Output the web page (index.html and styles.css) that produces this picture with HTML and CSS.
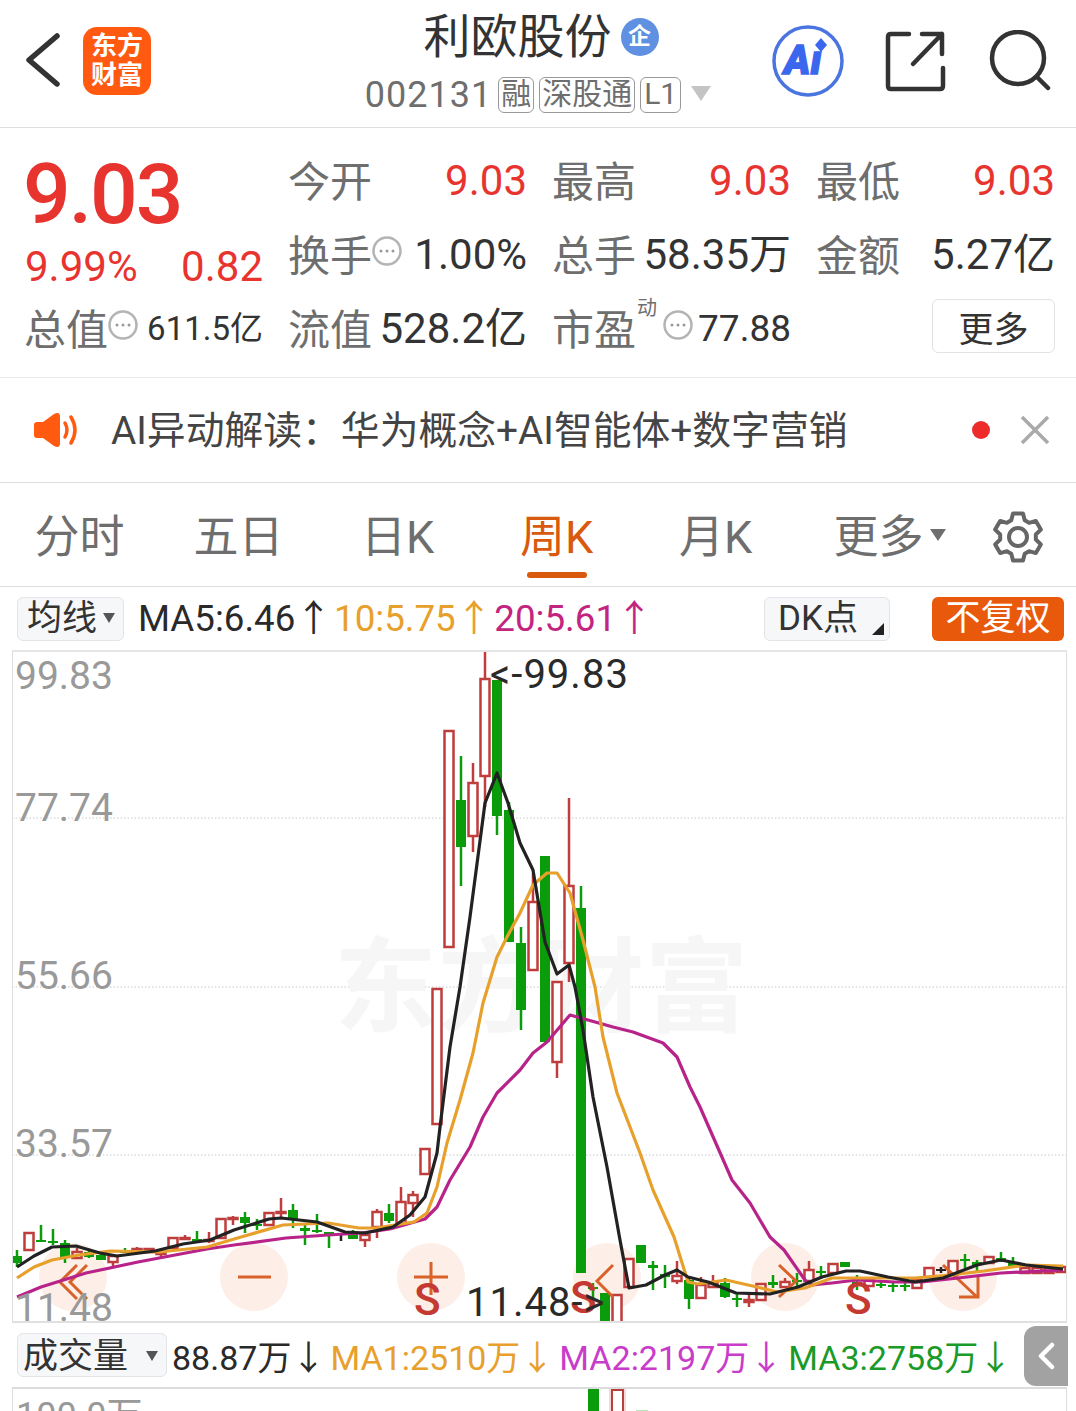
FILE: index.html
```html
<!DOCTYPE html>
<html lang="zh-CN">
<head>
    <meta charset="UTF-8">
    <title>利欧股份 002131</title>
    <link rel="stylesheet" href="styles.css">
</head>
<body>
    <svg class="sprite" xmlns="http://www.w3.org/2000/svg">
        <symbol id="more-dots" viewBox="0 0 30 30">
            <circle cx="15" cy="15" r="13.5" fill="none" stroke="#b4b4b4" stroke-width="2.5"></circle>
            <circle cx="9" cy="15" r="1.5" fill="#999"></circle>
            <circle cx="15" cy="15" r="1.5" fill="#999"></circle>
            <circle cx="21" cy="15" r="1.5" fill="#999"></circle>
        </symbol>
    </svg>

    <header class="top-bar">
        <div class="top-left">
            <svg class="back-icon" width="40" height="60" viewBox="0 0 40 60" fill="none" stroke="#333" stroke-width="5.5" stroke-linecap="round" stroke-linejoin="round">
                <polyline points="32,6 4,30 32,54"></polyline>
            </svg>
            <div class="app-logo"><span>东方</span><span>财富</span></div>
        </div>
        <div class="stock-title">
            <div class="stock-name">利欧股份<span class="corp-badge">企</span></div>
            <div class="stock-code">
                002131
                <span class="tag tag-first">融</span>
                <span class="tag">深股通</span>
                <span class="tag tag-l1">L1</span>
                <span class="code-arrow"></span>
            </div>
        </div>
        <div class="top-actions">
            <svg class="ai-icon" width="74" height="74" viewBox="0 0 74 74">
                <circle cx="37" cy="37" r="34" fill="none" stroke="#4a74e0" stroke-width="3.5"></circle>
                <text class="ai-text" x="13" y="50">Aı</text>
                <path d="M50 14 L56 21 L50 28 L44 21 Z" fill="#3a67ee"></path>
            </svg>
            <svg width="62" height="62" viewBox="0 0 62 62" fill="none" stroke="#333" stroke-width="4.5" stroke-linecap="round" stroke-linejoin="round">
                <path d="M24 4 H6 Q3 4 3 7 V56 Q3 59 6 59 H55 Q58 59 58 56 V38"></path>
                <path d="M28 34 L57 4 M37 4 H57 V24"></path>
            </svg>
            <svg width="62" height="62" viewBox="0 0 62 62" fill="none" stroke="#333" stroke-width="4.5" stroke-linecap="round">
                <circle cx="29" cy="28" r="26"></circle>
                <path d="M48 47 L59 58"></path>
            </svg>
        </div>
    </header>

    <section class="quote">
        <div class="price">9.03</div>
        <div class="cell"><span class="label">今开</span><span class="val up">9.03</span></div>
        <div class="cell"><span class="label">最高</span><span class="val up">9.03</span></div>
        <div class="cell"><span class="label">最低</span><span class="val up">9.03</span></div>

        <div class="cell change"><span class="val up">9.99%</span><span class="val up">0.82</span></div>
        <div class="cell"><span class="label">换手<svg class="dots"><use href="#more-dots"></use></svg></span><span class="val">1.00%</span></div>
        <div class="cell"><span class="label">总手</span><span class="val">58.35万</span></div>
        <div class="cell"><span class="label">金额</span><span class="val">5.27亿</span></div>

        <div class="cell"><span class="label">总值<svg class="dots"><use href="#more-dots"></use></svg></span><span class="val small">611.5亿</span></div>
        <div class="cell"><span class="label">流值</span><span class="val">528.2亿</span></div>
        <div class="cell"><span class="label">市盈<sup class="dyn">动</sup><svg class="dots"><use href="#more-dots"></use></svg></span><span class="val mid">77.88</span></div>
        <div class="cell"><span></span><button class="more-btn">更多</button></div>
    </section>

    <section class="notice">
        <svg class="speaker" width="44" height="36" viewBox="0 0 44 36">
            <path d="M3 10 H9 L20 2 Q26 -1 26 5 V31 Q26 37 20 34 L9 26 H3 Q0 26 0 23 V13 Q0 10 3 10 Z" fill="#ff5a10"></path>
            <path d="M31 11 Q35 18 31 25" fill="none" stroke="#ff5a10" stroke-width="3.5" stroke-linecap="round"></path>
            <path d="M37 5 Q45 18 37 31" fill="none" stroke="#ff5a10" stroke-width="3.5" stroke-linecap="round"></path>
        </svg>
        <div class="notice-text">AI异动解读：华为概念+AI智能体+数字营销</div>
        <span class="red-dot"></span>
        <svg class="close-icon" width="30" height="30" viewBox="0 0 30 30" stroke="#aaa" stroke-width="3.5">
            <path d="M2 2 L28 28 M28 2 L2 28"></path>
        </svg>
    </section>

    <nav class="tabs">
        <a class="tab">分时</a>
        <a class="tab">五日</a>
        <a class="tab">日K</a>
        <a class="tab active">周K</a>
        <a class="tab">月K</a>
        <a class="tab tab-more">更多<i class="tab-arrow"></i></a>
        <svg class="gear" width="52" height="52" viewBox="0 0 52 52" fill="none" stroke="#666" stroke-width="4" stroke-linejoin="round">
            <path d="M19.26 9.31 L21.01 2.52 H30.99 L32.74 9.31 L37.08 11.82 L43.84 9.94 L48.83 18.58 L43.82 23.49 V28.51 L48.83 33.42 L43.84 42.06 L37.08 40.18 L32.74 42.69 L30.99 49.48 H21.01 L19.26 42.69 L14.92 40.18 L8.16 42.06 L3.17 33.42 L8.18 28.51 V23.49 L3.17 18.58 L8.16 9.94 L14.92 11.82 Z"></path>
            <circle cx="26" cy="26" r="9"></circle>
        </svg>
    </nav>

    <div class="ma-bar">
        <div class="select">均线<i class="select-arrow"></i></div>
        <span class="ma black">MA5:6.46↑</span>
        <span class="ma orange">10:5.75↑</span>
        <span class="ma magenta">20:5.61↑</span>
        <div class="select dk">DK点<i class="corner"></i></div>
        <button class="adjust-btn">不复权</button>
    </div>

    <div class="chart-box">
        <svg id="kline" class="kline" viewBox="12 650 1055 673" xmlns="http://www.w3.org/2000/svg"></svg>
    </div>

    <div class="ma-bar vol-bar">
        <div class="select vol-select">成交量<i class="select-arrow"></i></div>
        <span class="ma black">88.87万↓</span>
        <span class="ma orange">MA1:2510万↓</span>
        <span class="ma violet">MA2:2197万↓</span>
        <span class="ma green">MA3:2758万↓</span>
        <div class="handle">
            <svg width="18" height="28" viewBox="0 0 18 28" fill="none" stroke="#fff" stroke-width="4.5" stroke-linecap="round" stroke-linejoin="round">
                <polyline points="15,3 4,14 15,25"></polyline>
            </svg>
        </div>
    </div>

    <div class="vol-chart">
        <span class="vol-label">100.0万</span>
        <span class="vol-bar-green"></span>
        <span class="vol-bar-red"></span>
        <span class="vol-bar-pale"></span>
    </div>

    <script src="chart.js"></script>
</body>
</html>
```

FILE: styles.css
```css
:root {
    --up: #e8342f;
    --line: #dedede;
    --text-gray: #6e6e6e;
    --text-dark: #333;
    --active: #d9590f;
    --box-bg: #f6f7f9;
    --font: Roboto, "Noto Sans CJK SC", sans-serif;
}

* {
    margin: 0;
    padding: 0;
    box-sizing: border-box;
}

html, body {
    height: 1411px;
    overflow: hidden;
}

body {
    background-color: #fff;
    font-family: var(--font);
    color: var(--text-dark);
}

.sprite {
    display: none;
}

/* Top bar */
.top-bar {
    height: 128px;
    display: grid;
    grid-template-columns: 1fr auto 1fr;
    align-items: center;
    border-bottom: 1px solid var(--line);
}

.top-left {
    display: flex;
    align-items: center;
    padding-left: 25px;
    gap: 18px;
}

.back-icon {
    margin-top: -8px;
}

.app-logo {
    width: 68px;
    height: 68px;
    border-radius: 14px;
    background-color: #ff5a10;
    color: #fff;
    display: flex;
    flex-direction: column;
    align-items: center;
    justify-content: center;
    font-size: 26px;
    font-weight: 700;
    line-height: 29px;
    margin-top: -6px;
}

.stock-title {
    align-self: start;
    display: flex;
    flex-direction: column;
    align-items: center;
    padding-top: 10px;
}

.stock-name {
    font-size: 47px;
    line-height: 54px;
    display: flex;
    align-items: center;
    gap: 9px;
    padding-left: 6px;
}

.corp-badge {
    width: 38px;
    height: 38px;
    border-radius: 50%;
    background-color: #5f90e2;
    color: #fff;
    font-size: 23px;
    font-weight: 700;
    line-height: 38px;
    text-align: center;
}

.stock-code {
    display: flex;
    align-items: center;
    font-size: 36px;
    letter-spacing: 1px;
    line-height: 42px;
    color: var(--text-gray);
    margin-top: 10px;
}

.tag {
    height: 36px;
    border: 1px solid #999;
    border-radius: 6px;
    font-size: 30px;
    line-height: 32px;
    letter-spacing: 0;
    padding: 0 2px;
    margin-left: 5px;
    color: var(--text-gray);
}

.tag-first {
    margin-left: 6px;
}

.tag-l1 {
    padding: 0 3px;
}

.code-arrow {
    width: 0;
    height: 0;
    margin-left: 10px;
    border-left: 10.5px solid transparent;
    border-right: 10.5px solid transparent;
    border-top: 15px solid #c4c4c4;
    margin-top: -4px;
}

.top-actions {
    display: flex;
    align-items: center;
    justify-content: flex-end;
    padding-right: 25px;
    gap: 42px;
    margin-top: -6px;
}

.ai-icon {
    margin-right: -2px;
}

.ai-text {
    font-family: Roboto, sans-serif;
    font-size: 40px;
    font-weight: 900;
    font-style: italic;
    fill: #3a67ee;
    stroke: #3a67ee;
    stroke-width: 1.4px;
}

/* Quote block */
.quote {
    height: 250px;
    padding: 16px 21px 0 25px;
    display: grid;
    grid-template-columns: repeat(4, 238px);
    grid-template-rows: repeat(3, 74px);
    column-gap: 26px;
    border-bottom: 1px solid #e8e8e8;
}

.price {
    font-size: 84px;
    font-weight: 500;
    letter-spacing: -2px;
    line-height: 62px;
    margin: 20px 0 0 -2px;
    color: var(--up);
}

.cell {
    display: flex;
    align-items: center;
    justify-content: space-between;
    white-space: nowrap;
}

.label {
    font-size: 42px;
    color: var(--text-gray);
    display: flex;
    align-items: flex-start;
    position: relative;
    margin: -6px 0 0 -1px;
}

.dots {
    width: 30px;
    height: 30px;
    margin-top: 14px;
    margin-left: 0;
}

.dyn {
    font-size: 20px;
    line-height: 20px;
    margin: 2px -20px 0 1px;
    width: 20px;
}

.dyn + .dots {
    margin-left: 26px;
}

.val {
    font-size: 42px;
    line-height: 50px;
    color: var(--text-dark);
}

.val.up {
    color: var(--up);
}

.val.small {
    font-size: 33px;
}

.val.mid {
    font-size: 37px;
}

.change {
    padding-top: 24px;
}

.more-btn {
    width: 123px;
    height: 54px;
    margin-top: -6px;
    background-color: #fff;
    border: 1px solid #e2e2e2;
    border-radius: 6px;
    font-family: var(--font);
    font-size: 35px;
    color: var(--text-dark);
}

/* Notice */
.notice {
    height: 105px;
    padding: 0 26px 0 34px;
    display: flex;
    align-items: center;
    border-bottom: 1px solid var(--line);
}

.notice-text {
    flex: 1;
    margin: -6px 0 0 33px;
    font-size: 38.8px;
    color: #444;
}

.red-dot {
    width: 18px;
    height: 18px;
    border-radius: 50%;
    background-color: #ee2b2b;
}

.close-icon {
    margin-left: 30px;
}

/* Tabs */
.tabs {
    height: 104px;
    display: grid;
    grid-template-columns: repeat(6, 159px) 122px;
    align-items: center;
    border-bottom: 1px solid var(--line);
}

.tab {
    font-size: 45px;
    color: var(--text-gray);
    text-align: center;
    position: relative;
    padding-top: 6px;
    line-height: 97px;
}

.tab.active {
    color: var(--active);
}

.tab.active::after {
    content: "";
    position: absolute;
    left: 50%;
    bottom: 8px;
    width: 60px;
    height: 6px;
    margin-left: -30px;
    border-radius: 3px;
    background-color: var(--active);
}

.tab-more {
    padding-left: 30px;
}

.tab-arrow {
    display: inline-block;
    margin-left: 6px;
    vertical-align: 12px;
    border-left: 8px solid transparent;
    border-right: 8px solid transparent;
    border-top: 12px solid var(--text-gray);
}

.gear {
    justify-self: center;
    margin: 4px 0 0 6px;
}

/* MA legend rows */
.ma-bar {
    height: 63px;
    padding: 0 12px 0 17px;
    display: flex;
    align-items: center;
    gap: 2px;
    white-space: nowrap;
    position: relative;
}

.select {
    height: 44px;
    width: 107px;
    flex-shrink: 0;
    padding-left: 9px;
    border: 1px solid #e2e4e8;
    border-radius: 6px;
    background-color: var(--box-bg);
    font-size: 35px;
    line-height: 42px;
    color: var(--text-dark);
    position: relative;
    margin-right: 12px;
}

.select-arrow {
    position: absolute;
    right: 8px;
    top: 15px;
    border-left: 6px solid transparent;
    border-right: 6px solid transparent;
    border-top: 10px solid #555;
}

.select.dk {
    width: 126px;
    padding-left: 13px;
    margin-left: auto;
    margin-right: 40px;
}

.corner {
    position: absolute;
    right: 5px;
    bottom: 5px;
    border-left: 12px solid transparent;
    border-bottom: 12px solid #222;
}

.ma {
    font-size: 36.7px;
    line-height: 44px;
}

.ma.black {
    color: #2a2a2a;
}

.ma.orange {
    color: #e8a02c;
}

.ma.magenta {
    color: #c2247f;
}

.ma.violet {
    color: #c93cc9;
}

.ma.green {
    color: #1a9a28;
}

.adjust-btn {
    width: 132px;
    height: 44px;
    flex-shrink: 0;
    border: none;
    border-radius: 6px;
    background-color: #e8590c;
    color: #fff;
    font-family: var(--font);
    font-size: 35px;
    line-height: 44px;
}

/* K-line */
.chart-box {
    width: 1055px;
    height: 673px;
    margin-left: 12px;
    border-top: 2px solid #e6e6e6;
    border-left: 1px solid var(--line);
    border-right: 1px solid var(--line);
    border-bottom: 2px solid #e0e0e0;
    overflow: hidden;
}

.kline {
    display: block;
    width: 1055px;
    height: 673px;
    margin: -2px 0 0 -1px;
}

.axis-label {
    font-family: var(--font);
    font-size: 39px;
    fill: #999;
}

.extreme-label {
    font-family: var(--font);
    font-size: 40px;
    letter-spacing: 1px;
    fill: #2a2a2a;
}

.watermark {
    font-family: var(--font);
    font-size: 103px;
    font-weight: 700;
    fill: #f6f6f6;
}

.s-mark {
    font-family: var(--font);
    font-size: 44px;
    font-weight: 500;
    fill: #c43a32;
}

/* Volume */
.vol-bar {
    height: 64px;
    gap: 5px;
}

.vol-select {
    width: 150px;
    padding-left: 5px;
    margin-right: 0;
    line-height: 46px;
}

.vol-select .select-arrow {
    top: 17px;
}

.vol-bar .ma {
    font-size: 34px;
    margin: 5px 0 0 0;
}

.handle {
    position: absolute;
    left: 1024px;
    top: 3px;
    width: 44px;
    height: 60px;
    border-radius: 12px 0 0 12px;
    background-color: #a2a2a2;
    display: flex;
    align-items: center;
    justify-content: center;
}

.vol-chart {
    width: 1055px;
    height: 60px;
    margin-left: 12px;
    border-top: 2px solid #dcdcdc;
    border-left: 1px solid var(--line);
    border-right: 1px solid var(--line);
    position: relative;
    overflow: hidden;
}

.vol-label {
    position: absolute;
    left: 3px;
    top: 9px;
    font-size: 36px;
    line-height: 36px;
    color: #999;
    white-space: nowrap;
}

.vol-bar-green,
.vol-bar-red,
.vol-bar-pale {
    position: absolute;
    top: 0;
    height: 30px;
}

.vol-bar-green {
    left: 575px;
    width: 11px;
    background-color: #0a9c0a;
}

.vol-bar-red {
    left: 598px;
    width: 13px;
    border: 2px solid #b5403c;
    border-bottom: none;
    outline: 2px solid #f8d8d6;
}

.vol-bar-pale {
    left: 623px;
    top: 21px;
    width: 12px;
    background-color: #b5ecb5;
}
```

FILE: chart.js
```js
// K-line picture, every value below is a page y pixel read off the chart
var svg = document.getElementById("kline");
var NS = "http://www.w3.org/2000/svg";
var RED = "#bf3d3d";
var GREEN = "#0a9c0a";

// index, wick top, body top, body bottom, wick bottom, colour
var candles = [
    [0, 1250, 1256, 1263, 1267, "g"], [1, 1233, 1233, 1250, 1250, "r"], [2, 1225, 1240, 1241, 1241, "g"],
    [3, 1229, 1241, 1243, 1245, "g"], [4, 1240, 1243, 1258, 1263, "g"], [5, 1248, 1252, 1258, 1258, "r"],
    [6, 1250, 1252, 1257, 1258, "g"], [7, 1252, 1255, 1260, 1260, "g"], [8, 1256, 1256, 1262, 1267, "r"],
    [9, 1248, 1250, 1253, 1253, "g"], [10, 1247, 1249, 1252, 1252, "r"], [11, 1248, 1249, 1252, 1252, "r"],
    [12, 1250, 1252, 1254, 1258, "r"], [13, 1238, 1238, 1248, 1248, "r"], [14, 1235, 1238, 1239, 1239, "r"],
    [15, 1231, 1239, 1240, 1240, "g"], [16, 1232, 1240, 1241, 1243, "r"], [17, 1219, 1219, 1238, 1238, "r"],
    [18, 1216, 1218, 1219, 1225, "r"], [19, 1212, 1217, 1223, 1233, "g"], [20, 1219, 1224, 1225, 1230, "g"],
    [21, 1213, 1213, 1225, 1225, "r"], [22, 1198, 1212, 1213, 1217, "r"], [23, 1204, 1210, 1219, 1228, "g"],
    [24, 1223, 1228, 1231, 1245, "g"], [25, 1214, 1230, 1232, 1233, "g"], [26, 1232, 1232, 1234, 1248, "g"],
    [27, 1233, 1233, 1234, 1241, "k"], [28, 1230, 1234, 1239, 1239, "g"], [29, 1235, 1235, 1240, 1247, "r"],
    [30, 1209, 1212, 1227, 1238, "r"], [31, 1204, 1213, 1221, 1223, "g"], [32, 1187, 1202, 1223, 1223, "r"],
    [33, 1191, 1195, 1203, 1217, "r"], [34, 1149, 1149, 1174, 1174, "r"], [35, 989, 989, 1124, 1124, "r"],
    [36, 731, 731, 947, 947, "r"], [37, 756, 800, 847, 886, "g"], [38, 763, 783, 836, 852, "r"],
    [39, 650, 679, 776, 807, "r"], [40, 680, 680, 816, 835, "g"], [41, 802, 810, 942, 942, "g"],
    [42, 927, 943, 1010, 1030, "g"], [43, 873, 902, 970, 970, "r"], [44, 856, 856, 1042, 1042, "g"],
    [45, 982, 982, 1062, 1078, "r"], [46, 798, 886, 963, 982, "r"], [47, 886, 908, 1273, 1273, "g"],
    [48, 1283, 1287, 1289, 1305, "g"], [49, 1293, 1293, 1330, 1330, "g"], [50, 1295, 1295, 1330, 1330, "r"],
    [51, 1259, 1259, 1287, 1287, "r"], [52, 1245, 1245, 1263, 1263, "g"], [53, 1261, 1265, 1268, 1290, "g"],
    [54, 1265, 1274, 1277, 1288, "g"], [55, 1261, 1276, 1281, 1284, "r"], [56, 1278, 1280, 1299, 1309, "g"],
    [57, 1277, 1285, 1298, 1298, "r"], [58, 1275, 1283, 1287, 1287, "r"], [59, 1278, 1283, 1297, 1298, "g"],
    [60, 1293, 1298, 1300, 1307, "g"], [61, 1293, 1300, 1302, 1307, "r"], [62, 1284, 1284, 1300, 1300, "r"],
    [63, 1275, 1282, 1285, 1288, "g"], [64, 1278, 1282, 1287, 1287, "r"], [65, 1273, 1280, 1281, 1287, "g"],
    [66, 1261, 1270, 1281, 1281, "r"], [67, 1266, 1271, 1273, 1279, "g"], [68, 1264, 1264, 1273, 1273, "r"],
    [69, 1262, 1262, 1267, 1267, "g"], [70, 1275, 1282, 1284, 1290, "g"], [71, 1280, 1280, 1286, 1286, "r"],
    [72, 1280, 1284, 1285, 1288, "g"], [73, 1282, 1285, 1287, 1292, "g"], [74, 1283, 1285, 1287, 1291, "g"],
    [75, 1280, 1280, 1288, 1288, "r"], [76, 1268, 1268, 1277, 1277, "r"], [77, 1267, 1269, 1271, 1273, "k"],
    [78, 1261, 1261, 1275, 1275, "r"], [79, 1254, 1259, 1261, 1268, "g"], [80, 1260, 1262, 1265, 1273, "g"],
    [81, 1257, 1257, 1263, 1263, "r"], [82, 1252, 1258, 1260, 1262, "g"], [83, 1257, 1262, 1266, 1267, "g"],
    [84, 1267, 1268, 1273, 1273, "r"], [85, 1268, 1268, 1273, 1273, "r"], [86, 1268, 1268, 1273, 1273, "r"],
    [87, 1267, 1267, 1272, 1272, "r"]
];

var ma5 = "17,1267 34,1256 52,1247 76,1246 100,1253 117,1256 155,1251 183,1244 210,1240 234,1230 269,1219 281,1218 317,1222 345,1232 365,1233 393,1227 410,1215 425,1197 437,1153 440,1127 450,1047 460,987 470,917 485,803 497,773 508,803 520,843 533,870 545,942 557,974 569,965 575,987 583,1030 593,1097 607,1167 620,1240 629,1288 646,1285 665,1275 677,1270 688,1277 708,1282 736,1293 770,1294 798,1287 822,1277 846,1271 860,1271 888,1277 915,1282 943,1278 977,1265 1001,1260 1026,1265 1063,1269";
var ma10 = "17,1278 34,1267 52,1260 79,1255 110,1251 159,1252 207,1247 241,1237 283,1225 328,1223 359,1228 376,1228 414,1222 427,1213 437,1187 447,1143 460,1100 473,1053 483,1003 497,957 507,937 520,913 533,885 547,873 557,873 570,893 583,940 595,987 603,1037 617,1093 640,1153 653,1190 674,1237 688,1282 698,1284 726,1280 757,1287 777,1292 805,1288 832,1278 860,1278 888,1278 915,1278 950,1275 984,1271 1026,1265 1063,1266";
var ma20 = "17,1297 41,1287 86,1273 138,1262 207,1249 234,1245 286,1238 328,1235 362,1233 390,1229 425,1219 437,1207 450,1180 470,1147 483,1117 497,1093 520,1070 533,1053 547,1042 570,1015 613,1027 633,1032 663,1043 677,1057 690,1087 700,1107 732,1180 750,1203 770,1237 784,1250 805,1280 812,1285 832,1283 857,1280 895,1282 922,1282 967,1277 1001,1273 1063,1270";

function add(tag, attrs, text) {
    var el = document.createElementNS(NS, tag);
    for (var k in attrs) el.setAttribute(k, attrs[k]);
    if (text) el.textContent = text;
    svg.appendChild(el);
    return el;
}

// dotted grid
[818, 987, 1155].forEach(function (y) {
    add("line", { x1: 12, x2: 1067, y1: y, y2: y, stroke: "#c8c8c8", "stroke-dasharray": "1.5 2" });
});

add("text", { "class": "watermark", x: 334, y: 1024, textLength: 414 }, "东方财富");

// round overlay buttons
[73, 254, 431, 607, 785, 963].forEach(function (x) {
    add("circle", { cx: x, cy: 1277, r: 34, fill: "#fdefe8" });
});

candles.forEach(function (c) {
    var x = 17 + 12 * c[0];
    var col = c[5] == "r" ? RED : c[5] == "k" ? "#222" : GREEN;
    add("line", { x1: x, x2: x, y1: c[1], y2: c[4], stroke: col, "stroke-width": 2.5 });
    if (c[5] == "r") {
        add("rect", { x: x - 4.5, y: c[2], width: 9, height: c[3] - c[2], fill: "#fff", stroke: col, "stroke-width": 2.5 });
    } else {
        add("rect", { x: x - 5, y: c[2], width: 10, height: Math.max(c[3] - c[2], 2), fill: col });
    }
});

// overlay icons
var iconAttrs = { fill: "none", stroke: "#d9622a", "stroke-width": 3 };
function icon(d) {
    var a = { d: d };
    for (var k in iconAttrs) a[k] = iconAttrs[k];
    add("path", a);
}
icon("M77 1265 L60 1282 L77 1299 M87 1265 L70 1282 L87 1299");
icon("M238 1277 H271");
icon("M414 1277 H448 M431 1262 V1295");
icon("M613 1265 L597 1281 L613 1297");
icon("M779 1265 L796 1281 L779 1297");
icon("M943 1265 L977 1297 M959 1297 H978 V1277");

[[ma20, "#b8238a"], [ma10, "#e8a02c"], [ma5, "#222"]].forEach(function (m) {
    add("polyline", { points: m[0], fill: "none", stroke: m[1], "stroke-width": 3.2, "stroke-linejoin": "round" });
});

add("text", { "class": "s-mark", x: 414, y: 1315 }, "S");
add("text", { "class": "s-mark", x: 570, y: 1313 }, "S");
add("text", { "class": "s-mark", x: 845, y: 1314 }, "S");

add("text", { "class": "axis-label", x: 15, y: 689 }, "99.83");
add("text", { "class": "axis-label", x: 15, y: 821 }, "77.74");
add("text", { "class": "axis-label", x: 15, y: 989 }, "55.66");
add("text", { "class": "axis-label", x: 15, y: 1157 }, "33.57");
add("text", { "class": "axis-label", x: 15, y: 1321 }, "11.48");
add("text", { "class": "extreme-label", x: 490, y: 688 }, "<-99.83");
add("text", { "class": "extreme-label", x: 466, y: 1316 }, "11.48->");
```
